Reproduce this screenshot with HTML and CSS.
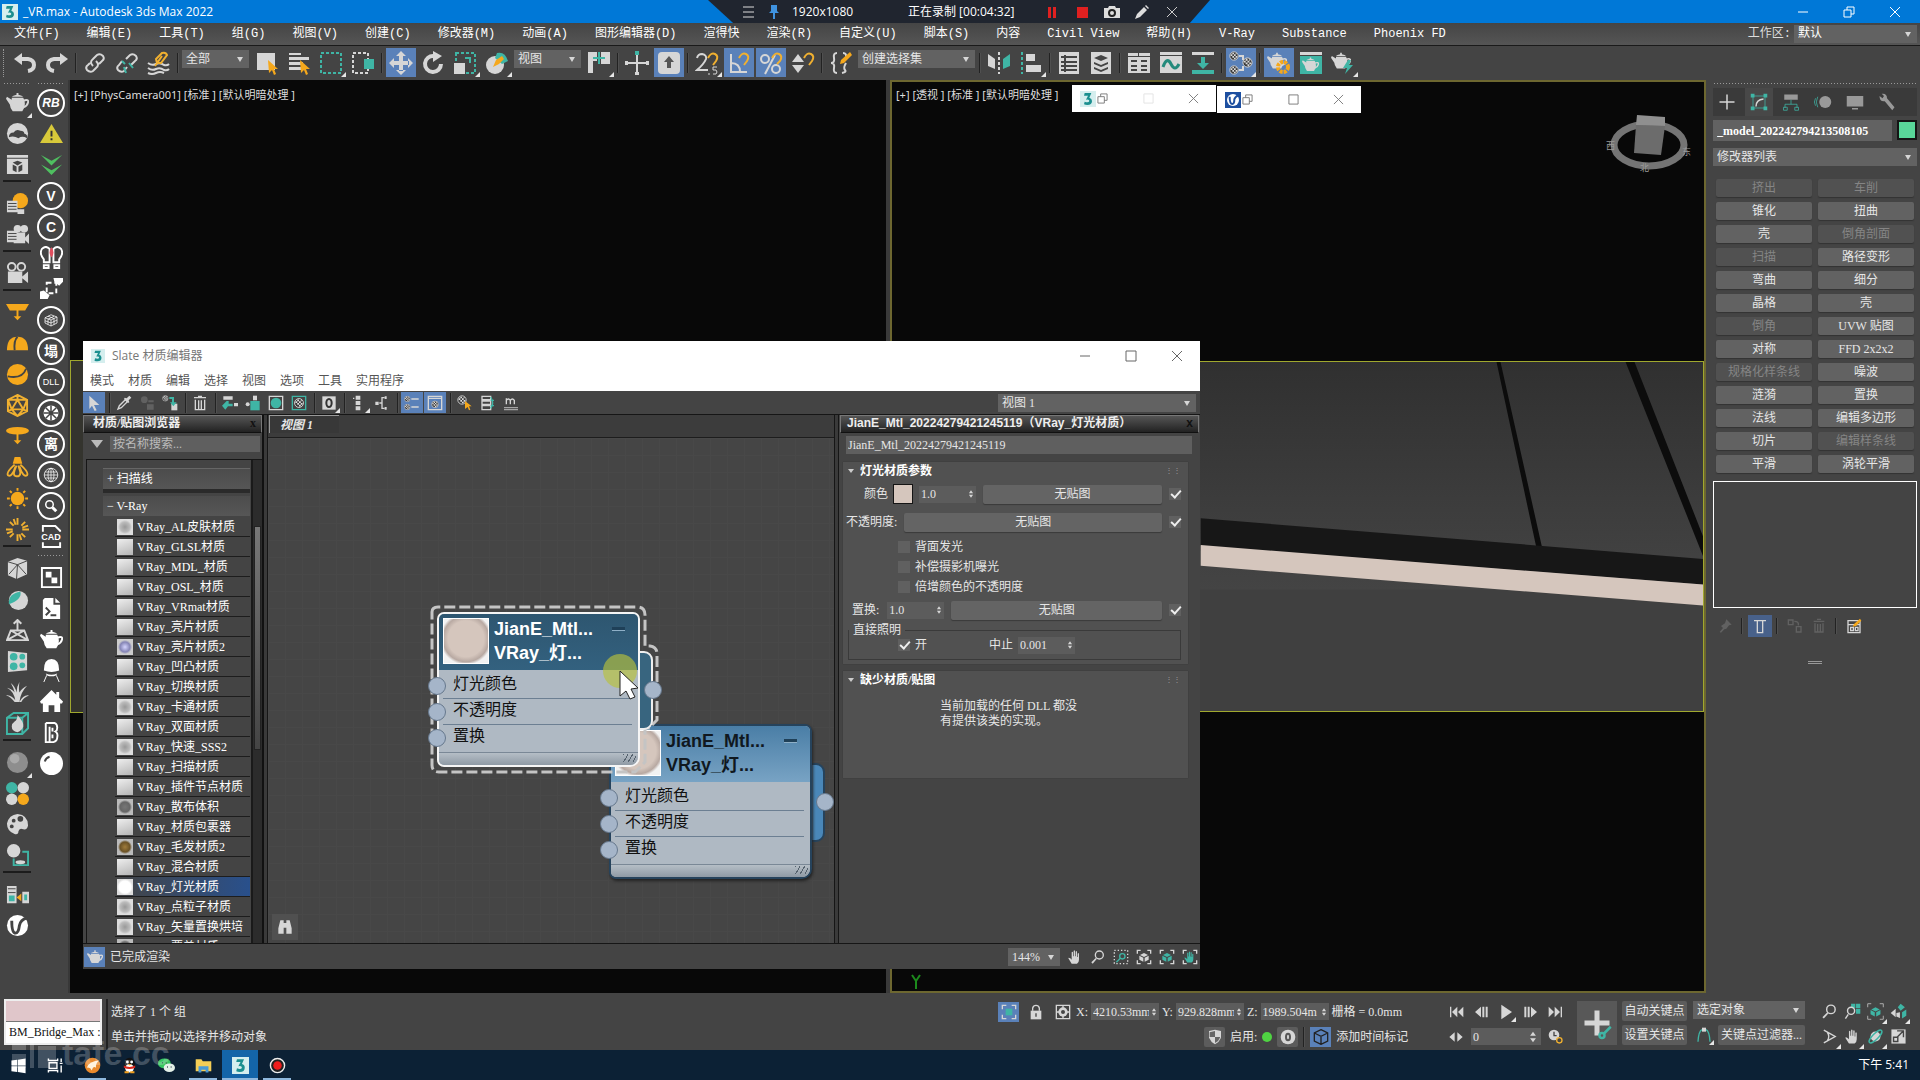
FILE: index.html
```html
<!DOCTYPE html>
<html lang="zh-CN">
<head>
    <meta charset="UTF-8">
    <meta name="viewport" content="width=device-width, initial-scale=1.0">
    <title>_VR.max - Autodesk 3ds Max 2022</title>
    <link rel="stylesheet" href="styles.css">
</head>
<body>
    <!-- Shared icons -->
    <svg class="sprite" aria-hidden="true">
        <symbol id="teapot" viewBox="0 0 24 24"><path d="M6 7h12q4 7-1 14H7Q4 17 4 14L0 8l1-2 5 3zM11 2h2v2q4 1 5 2H6q1-1 5-2z"/><path d="M18 10q6-2 5 2-1 4-5 5" fill="none" stroke="currentColor" stroke-width="2"/></symbol>
        <symbol id="mag" viewBox="0 0 24 24"><circle cx="14" cy="9" r="6" fill="none" stroke="currentColor" stroke-width="2"/><path d="M9 13l1 2-6 7-2-2z"/></symbol>
        <symbol id="hand" viewBox="0 0 24 24"><path d="M7 22l-5-8q0-2 3 0l2 2V5q1-2 2 0v6h1V3q1-2 2 0v8h1V4q1-2 2 0v8h1V7q1-2 2 0v9q0 4-3 6z"/></symbol>
        <symbol id="max" viewBox="0 0 24 24"><rect width="24" height="24" fill="#d5eeee"/><path d="M7 3h10l-3 7q4 1 4 5 0 6-7 6-3 0-5-1l1-4q6 2 7-1 0-3-5-2l3-6H6z" fill="#1b8f8f"/></symbol>
        <symbol id="cube" viewBox="0 0 24 24"><path d="M12 6l6 3-6 3-6-3zM5 10l6 3v6l-6-3zM19 10l-6 3v6l6-3z"/></symbol>
        <symbol id="checks" viewBox="0 0 12 12"><circle cx="6" cy="6" r="5" fill="#3a3a3a" stroke="#ddd"/><path d="M4 2h2v2H4zM8 2h1v2H8zM2 4h2v2H2zM6 4h2v2H6zM4 6h2v2H4zM8 6h2v2H8zM6 8h2v2H6z" fill="#ddd"/></symbol>
        <symbol id="spinarrows" viewBox="0 0 24 24"><path d="M12 3l5 7H7zM12 21l5-7H7z"/></symbol>
    </svg>

    <header class="titlebar">
        <svg class="app-icon"><use href="#max"/></svg>
        <span class="app-title">_VR.max - Autodesk 3ds Max 2022</span>
        <div class="win-buttons">
            <button aria-label="最小化"><svg viewBox="0 0 12 12"><path d="M1 6h10"/></svg></button>
            <button aria-label="还原"><svg viewBox="0 0 12 12"><path d="M1 4h7v7H1zM4 4V1h7v7H8"/></svg></button>
            <button aria-label="关闭"><svg viewBox="0 0 12 12"><path d="M1 1l10 10M11 1L1 11"/></svg></button>
        </div>
        <div class="recorder">
            <svg viewBox="0 0 16 16"><path d="M3 3h11M3 8h11M3 13h11" stroke="#ddd"/></svg>
            <svg viewBox="0 0 16 16"><path d="M5 1h6v6l2 2H3l2-2zM7 9h2v6H7z" fill="#3f93e0"/></svg>
            <span class="rec-size">1920x1080</span>
            <span class="rec-state">正在录制 [00:04:32]</span>
            <svg viewBox="0 0 16 16"><path d="M4 3h3v11H4zM9 3h3v11H9z" fill="#e02020"/></svg>
            <svg viewBox="0 0 16 16"><path d="M3 3h11v11H3z" fill="#e02020"/></svg>
            <svg viewBox="0 0 16 16"><path d="M0 4h4l1-2h6l1 2h4v10H0z" fill="#ddd"/><circle cx="8" cy="9" r="3" fill="none" stroke="#222" stroke-width="2"/></svg>
            <svg viewBox="0 0 16 16"><path d="M1 15l2-5 7-7 3 3-7 7zM11 2l1-1 3 3-1 1z" fill="#ddd"/></svg>
            <svg viewBox="0 0 16 16"><path d="M3 3l10 10M13 3L3 13" stroke="#ccc"/></svg>
        </div>
    </header>

    <nav class="menubar">
        <a href="#">文件(F)</a><a href="#">编辑(E)</a><a href="#">工具(T)</a><a href="#">组(G)</a><a href="#">视图(V)</a><a href="#">创建(C)</a><a href="#">修改器(M)</a><a href="#">动画(A)</a><a href="#">图形编辑器(D)</a><a href="#">渲得快</a><a href="#">渲染(R)</a><a href="#">自定义(U)</a><a href="#">脚本(S)</a><a href="#">内容</a><a href="#">Civil View</a><a href="#">帮助(H)</a><a href="#">V-Ray</a><a href="#">Substance</a><a href="#">Phoenix FD</a>
        <label class="workspace" for="workspace">工作区:</label>
        <span class="drop workspace-drop"><select id="workspace"><option>默认</option></select></span>
    </nav>

    <div class="toolbar">
        <i class="grip"></i>
        <button class="tool" aria-label="撤消"><svg viewBox="0 0 24 24"><path class="line thick" d="M6 8h9q6 1 6 6t-6 6"/><path d="M9 2v12L1 8z"/></svg></button>
        <button class="tool" aria-label="重做"><svg viewBox="0 0 24 24"><path class="line thick" d="M18 8H9q-6 1-6 6t6 6"/><path d="M15 2v12l8-6z"/></svg></button>
        <i class="sep"></i>
        <button class="tool" aria-label="链接"><svg viewBox="0 0 24 24"><path class="line" d="M10 15q-4-4 0-7l4-4q3-2 6 1 2 3-1 5l-3 3M13 10q4 4 0 7l-3 3q-3 2-6-1-2-3 1-5l2-2"/></svg></button>
        <button class="tool" aria-label="取消链接"><svg viewBox="0 0 24 24"><path class="line" d="M11 8l4-4q3-2 6 1 2 3-1 5l-4 4M12 16l-3 4q-3 2-6-1-2-3 1-5l3-4"/><path class="line line-teal" d="M10 13l-3-3M14 12l4 5M9 16l2 6"/></svg></button>
        <button class="tool" aria-label="绑定"><svg viewBox="0 0 24 24"><path class="line" d="M1 12q4 3 8 1t8 1q3 1 5-1M1 17q4 3 8 1t8 1q3 1 5-1M1 22q4 2 8 0t8 0"/><path class="line line-amber" d="M10 12l-1-4 6-6q4-1 5 2l-6 8zM15 5l-7 10"/></svg></button>
        <i class="sep"></i>
        <span class="drop filter-drop"><select aria-label="选择过滤器"><option>全部</option></select></span>
        <button class="tool" aria-label="选择对象"><svg viewBox="0 0 24 24"><path d="M2 2h18v17H2z"/><path class="amber" d="M13 9l10 9h-4l2 5-2 1-2-5-3 3z"/></svg></button>
        <button class="tool" aria-label="按名称选择"><svg viewBox="0 0 24 24"><path d="M2 2h12v2H2zM2 6h20v3H2zM2 11h14v3H2zM2 16h12v3H2z"/><path class="amber" d="M13 9l10 9h-4l2 5-2 1-2-5-3 3z"/></svg></button>
        <button class="tool more" aria-label="矩形选择区域"><svg viewBox="0 0 24 24"><path class="line line-teal" stroke-dasharray="3 2" d="M2 2h20v20H2z"/></svg></button>
        <button class="tool" aria-label="窗口/交叉"><svg viewBox="0 0 24 24"><path class="line" stroke-dasharray="3 2" d="M2 2h15v20H2z"/><path class="teal" d="M13 8h10v10H13z"/></svg></button>
        <i class="sep"></i>
        <button class="tool on" aria-label="移动"><svg viewBox="0 0 24 24"><path d="M12 0l5 5H7zM12 24l5-5H7zM0 12l5-5v10zM24 12l-5-5v10zM10 4h4v6h6v4h-6v6h-4v-6H4v-4h6z"/></svg></button>
        <button class="tool" aria-label="旋转"><svg viewBox="0 0 24 24"><path class="line thick" d="M13 5a8 8 0 1 0 7 8"/><path d="M12 0l9 5-9 6z"/></svg></button>
        <button class="tool more" aria-label="缩放"><svg viewBox="0 0 24 24"><path class="line line-teal" stroke-dasharray="3 2" d="M3 2h19v20H3z"/><path d="M1 12h11v11H1z"/><path class="line line-teal" d="M12 7h5v5"/></svg></button>
        <button class="tool more" aria-label="放置"><svg viewBox="0 0 24 24"><circle cx="10" cy="14" r="9"/><path class="teal" d="M12 2q8-2 11 8l-6 3-7-6z"/><path class="amber" d="M8 16l3-7 6-4 2 3-5 5z"/></svg></button>
        <span class="drop filter-drop"><select aria-label="参考坐标系"><option>视图</option></select></span>
        <button class="tool more" aria-label="使用轴点中心"><svg viewBox="0 0 24 24"><path d="M1 1h9v9H6v12H1zM14 1h9v12h-9z"/><path class="line line-teal" d="M12 1v12M6 7h12"/></svg></button>
        <i class="sep"></i>
        <button class="tool" aria-label="选择并操纵"><svg viewBox="0 0 24 24"><path class="line" d="M12 4v18M2 12h20"/><path class="teal" d="M10 0h4v4h-4z"/><path d="M0 10h3v4H0zM21 10h3v4h-3zM10 21h4v3h-4z"/></svg></button>
        <button class="tool on" aria-label="快捷键覆盖"><svg viewBox="0 0 24 24"><rect x="1" y="1" width="22" height="22" rx="4"/><path d="M12 5l5 6h-3v6h-4v-6H7z" fill="#555"/></svg></button>
        <i class="sep"></i>
        <button class="tool more" aria-label="捕捉"><svg viewBox="0 0 24 24"><path class="line" d="M2 7q1-4 5-4 5 1 4 5-2 5-9 11h11"/><path class="line line-amber" d="M13 7q3-6 7-4t1 7l-3 4"/><path class="line hair" d="M22 16h-4v3q4-1 4 2t-4 2M14 22v2"/></svg></button>
        <button class="tool on" aria-label="角度捕捉"><svg viewBox="0 0 24 24"><path class="line" d="M4 3v18h16M4 12q9 0 9 9"/><path class="line line-amber" d="M12 7q3-6 7-4t1 7l-3 4"/></svg></button>
        <button class="tool on" aria-label="百分比捕捉"><svg viewBox="0 0 24 24"><circle class="line" cx="6" cy="8" r="4"/><circle class="line" cx="17" cy="18" r="4"/><path class="line" d="M16 4L6 23"/><path class="line line-amber" d="M13 7q3-6 7-4t1 7l-3 3"/></svg></button>
        <button class="tool" aria-label="微调器捕捉"><svg viewBox="0 0 24 24"><path d="M7 3l6 8H1zM7 22l6-8H1z"/><path class="line line-amber" d="M13 7q3-6 7-4t1 7l-3 4"/></svg></button>
        <i class="sep"></i>
        <button class="tool" aria-label="编辑命名选择集"><svg viewBox="0 0 24 24"><path class="line" d="M8 2Q4 2 5 7t-3 5q4 0 3 5t3 5M14 2q4 0 3 5M17 12q-3 5-1 7t-3 3"/><path class="amber" d="M11 13l1-4 9-8 2 3-8 8z"/></svg></button>
        <span class="drop set-drop"><select aria-label="命名选择集"><option>创建选择集</option></select></span>
        <i class="sep"></i>
        <button class="tool" aria-label="镜像"><svg viewBox="0 0 24 24"><path d="M1 3l7 5v10l-7-3z"/><path class="teal" d="M23 3l-7 5v10l7-3z"/><path class="line" stroke-dasharray="3 2" d="M12 1v22"/></svg></button>
        <button class="tool more" aria-label="对齐"><svg viewBox="0 0 24 24"><path class="line line-teal" stroke-dasharray="3 2" d="M3 1v22"/><path d="M7 3h9v7H7zM7 14h15v7H7z"/></svg></button>
        <i class="sep"></i>
        <button class="tool" aria-label="场景资源管理器"><svg viewBox="0 0 24 24"><path d="M2 1h20v22H2z"/><path d="M4 6h16M4 11h16M4 15h16M4 19h16M8 4v17" stroke="#444" stroke-width="2"/></svg></button>
        <button class="tool" aria-label="层资源管理器"><svg viewBox="0 0 24 24"><path d="M2 1h20v22H2z"/><path d="M12 4l7 3-7 3-7-3zM5 11l7 3 7-3v2l-7 3-7-3zM5 16l7 3 7-3v2l-7 3-7-3z" fill="#444"/></svg></button>
        <i class="sep"></i>
        <button class="tool" aria-label="功能区"><svg viewBox="0 0 24 24"><path d="M1 2h10v3H1zM12 2h11v3H12zM1 6h22v16H1z"/><path d="M4 10h6M4 15h6M14 10h6M14 15h6M4 19h6M14 19h6" stroke="#444" stroke-width="2"/></svg></button>
        <button class="tool" aria-label="曲线编辑器"><svg viewBox="0 0 24 24"><path d="M1 1h22v3H1zM1 5h22v17H1z"/><path d="M4 16q4-11 8-3t8 0" fill="none" stroke="#248a7c" stroke-width="3"/></svg></button>
        <button class="tool" aria-label="图解视图"><svg viewBox="0 0 24 24"><path d="M1 1h22v3H1z"/><path class="teal" d="M10 6h4v6h4l-6 6-6-6h4zM1 19h22v4H1z"/></svg></button>
        <i class="sep"></i>
        <button class="tool on more" aria-label="材质编辑器"><svg viewBox="0 0 24 24"><use href="#checks" x="0" y="0" width="10" height="10"/><use href="#checks" x="0" y="14" width="10" height="10"/><use href="#checks" x="13" y="6" width="11" height="11"/><path class="line" d="M10 5h4v4M10 19h4v-4"/></svg></button>
        <i class="sep"></i>
        <button class="tool on" aria-label="渲染设置"><svg viewBox="0 0 24 24"><use href="#teapot" width="20" height="20"/><circle cx="16" cy="16" r="5" fill="none" stroke="#f5a81c" stroke-width="4" stroke-dasharray="3 1"/></svg></button>
        <button class="tool" aria-label="渲染帧窗口"><svg viewBox="0 0 24 24"><path d="M1 1h22v3H1z"/><path class="teal" d="M1 5h22v18H1z"/><use href="#teapot" x="3" y="5" width="17" height="17"/></svg></button>
        <button class="tool more" aria-label="渲染"><svg viewBox="0 0 24 24"><use href="#teapot" width="20" height="20"/><path class="teal" d="M17 9l-5 8h4l-2 6 8-9h-4l2-5z"/></svg></button>
    </div>

    <main class="workspace-area">
        <div class="side">
            <div class="side-col">
                <i class="dots"></i>
                <button class="more" aria-label="渲染"><svg viewBox="0 0 24 24"><use href="#teapot" width="24" height="24"/></svg></button>
                <button aria-label="云渲染"><svg viewBox="0 0 24 24"><circle cx="12" cy="12" r="11"/><path d="M3 16q0-5 5-5 2-4 7-2 4 0 4 3 4 1 3 5-5-3-9 0-5-3-10-1z" fill="#444"/></svg></button>
                <button aria-label="渲染窗口"><svg viewBox="0 0 24 24"><path d="M1 2h22v3H1zM1 6h22v16H1z"/><path d="M12 8l5 2-5 3-5-3zM7 12l4 2v6l-4-2zM17 12l-4 2v6l4-2z" fill="#444"/></svg></button>
                <i class="rule"></i>
                <button aria-label="灯光列表"><svg viewBox="0 0 24 24"><circle class="amber" cx="15" cy="9" r="8"/><path d="M12 18h7v5h-7zM1 9h11v12H1z"/><path d="M2 12h9M2 15h9M2 18h9" stroke="#444"/></svg></button>
                <button aria-label="摄影机列表"><svg viewBox="0 0 24 24"><circle cx="12" cy="6" r="4"/><circle cx="19" cy="6" r="4"/><path d="M8 10h12v11H8zM20 15l4-4v11l-4-4zM1 8h11v12H1z"/><path d="M2 11h9M2 14h9M2 17h9" stroke="#444"/></svg></button>
                <i class="rule"></i>
                <button aria-label="物理摄影机"><svg viewBox="0 0 24 24"><circle class="line" cx="6" cy="5" r="4"/><circle class="line" cx="16" cy="5" r="4"/><path d="M2 10h15v12H2zM17 15l6-5v12l-6-5z"/></svg></button>
                <i class="rule"></i>
                <button aria-label="平面灯"><svg class="amber" viewBox="0 0 24 24"><path d="M0 3h24l-4 7H4zM11 9h2v7h3l-4 4-4-4h3z"/></svg></button>
                <button aria-label="穹顶灯"><svg class="amber" viewBox="0 0 24 24"><path d="M1 19Q1 5 12 5t11 14z"/><path d="M12 5Q8 9 9 19" fill="none" stroke="#444" stroke-width="2"/></svg></button>
                <button aria-label="球形灯"><svg class="amber" viewBox="0 0 24 24"><circle cx="12" cy="12" r="11"/><path d="M2 14q15 3 19-8" fill="none" stroke="#444" stroke-width="2"/></svg></button>
                <button aria-label="网格灯"><svg viewBox="0 0 24 24"><path class="line line-amber" d="M12 1l10 5v12l-10 5-10-5V6zM12 6l6 10H6zM12 1v5M2 6l10 0 10 0M2 18l4-2M22 18l-4-2M2 6l4 10M22 6l-4 10M6 16l6 7 6-7"/></svg></button>
                <button aria-label="圆盘灯"><svg class="amber" viewBox="0 0 24 24"><ellipse cx="12" cy="6" rx="12" ry="4"/><path d="M11 9h2v7h3l-4 4-4-4h3z"/></svg></button>
                <button aria-label="IES灯"><svg viewBox="0 0 24 24"><path class="amber" d="M9 1h6l2 7H7z"/><path class="line line-amber" d="M9 9q-9 8-7 11 4 3 8-9M15 9q9 8 7 11-4 3-8-9M11 10q-5 10-1 11 5 1 5-4l-2-7"/></svg></button>
                <button aria-label="太阳"><svg class="amber" viewBox="0 0 24 24"><circle cx="12" cy="12" r="7"/><path d="M12 1v3M12 20v3M1 12h3M20 12h3M4 4l2 2M18 18l2 2M20 4l-2 2M4 20l2-2" stroke="#f5a81c" stroke-width="2"/></svg></button>
                <button aria-label="环境灯"><svg viewBox="0 0 24 24"><path class="line line-amber" d="M12 0v7M12 17v7M0 12h7M17 12h7M4 4l4 4M16 16l4 4M20 4l-4 4M8 16l-4 4M8 1l2 6M14 17l2 6M1 16l6-2M17 10l6-2"/></svg></button>
                <i class="rule"></i>
                <button aria-label="代理"><svg viewBox="0 0 24 24"><path d="M2 5l10-4 10 3v14l-11 5-9-4z"/><path d="M2 5l10 3 10-4M12 8l-1 15M12 8L3 18M12 8l9 10" fill="none" stroke="#444"/></svg></button>
                <button aria-label="毛发"><svg viewBox="0 0 24 24"><circle cx="13" cy="13" r="10"/><path class="teal" d="M3 17Q2 6 15 4q2 8-12 13z"/></svg></button>
                <button aria-label="平面"><svg viewBox="0 0 24 24"><path class="line" d="M5 12h14l4 10H1zM5 12l18 10M19 12L1 22M12 13V1M8 5l4-4 4 4"/></svg></button>
                <button aria-label="置换"><svg viewBox="0 0 24 24"><path d="M2 1l20 2v18L2 23z"/><circle class="teal" cx="8" cy="7" r="4"/><circle class="teal" cx="17" cy="7" r="3"/><circle class="teal" cx="8" cy="17" r="4"/><circle class="teal" cx="17" cy="16" r="3"/></svg></button>
                <button aria-label="草"><svg viewBox="0 0 24 24"><path d="M10 22Q9 11 1 7q5 1 8 5Q8 7 5 2q5 4 6 10 0-6 3-11-1 7 0 11 3-5 8-7-7 7-8 17zM9 22Q5 16 0 15q6-1 11 7zM14 22q4-8 10-7-6 2-8 7z"/></svg></button>
                <button aria-label="火焰"><svg viewBox="0 0 24 24"><path class="line line-teal" d="M1 6l7-5h15v16l-6 6H1zM1 6h16v17M17 6l6-5"/><path d="M12 3q7 8 6 12t-6 6q-6-1-6-6 0-3 3-5 3-2 3-7z"/></svg></button>
                <i class="rule"></i>
                <button class="more" aria-label="材质球"><svg viewBox="0 0 24 24"><circle cx="12" cy="12" r="11" fill="#8e8e8e"/><circle cx="9" cy="8" r="5" fill="#aaa"/></svg></button>
                <button aria-label="材质库"><svg viewBox="0 0 24 24"><circle class="teal" cx="6" cy="6" r="6"/><circle cx="18" cy="6" r="6"/><circle cx="6" cy="18" r="6"/><circle class="amber" cx="18" cy="18" r="6"/></svg></button>
                <button aria-label="调色板"><svg viewBox="0 0 24 24"><path d="M12 1q11 1 11 12-1 5-5 4-4-2-5 2 0 4-4 3Q1 19 1 11 3 2 12 1z"/><g fill="#444"><circle cx="8" cy="8" r="2"/><circle cx="15" cy="6" r="3"/><circle cx="6" cy="14" r="2"/></g></svg></button>
                <button aria-label="烘焙"><svg viewBox="0 0 24 24"><circle cx="8" cy="7" r="7"/><path class="line line-teal" d="M17 8h6v14H8v-7"/><ellipse cx="15" cy="19" rx="5" ry="2"/></svg></button>
                <i class="rule"></i>
                <button aria-label="帧缓冲"><svg viewBox="0 0 24 24"><path d="M1 3h10v18H1zM17 9h7v12h-7z"/><path class="teal" d="M3 13h6v6H3zM19 12h3v6h-3z"/><path class="amber" d="M11 15l5-4v8z"/><path d="M2 6h8M2 10h8" stroke="#444"/></svg></button>
                <button aria-label="V-Ray"><svg class="white" viewBox="0 0 24 24"><circle cx="12" cy="12" r="11"/><path d="M6 7q0 13 4 13 3 0 4-8 1-6 8-8" fill="none" stroke="#444" stroke-width="3"/></svg></button>
            </div>
            <div class="side-col white">
                <i class="dots"></i>
                <button class="ring rb">RB</button>
                <button aria-label="警告"><svg viewBox="0 0 24 24"><path d="M12 2l12 20H0z" fill="#d8c93a"/><path d="M11 9h2v6h-2zM11 17h2v2h-2z" fill="#333"/></svg></button>
                <button aria-label="向下"><svg viewBox="0 0 24 24"><path d="M1 2l11 6 11-6-11 11zM1 12l11 6 11-6-11 11z" fill="#4fbf60"/></svg></button>
                <button class="ring">V</button>
                <button class="ring">C</button>
                <button aria-label="灯泡"><svg viewBox="0 0 24 24"><path class="line" d="M4 17v-3Q-1 8 2 3q4-4 8 0v14zM20 17v-3q5-6 2-11-4-4-8 0v14zM4 20h5v3H4zM15 20h5v3h-5z"/><path d="M12 1q4 6 0 11-4-5 0-11z" fill="#e05060"/></svg></button>
                <button aria-label="区域"><svg viewBox="0 0 24 24"><path class="line" stroke-dasharray="5 3" d="M7 6h10v11H7z"/><path d="M14 1h10v4l-4 4-5-4zM0 15l4-1 6 5-2 4H0z"/></svg></button>
                <button class="ring" aria-label="代理"><svg viewBox="0 0 24 24"><path class="line hair" d="M4 9l8-4 8 3v8l-8 4-8-4zM4 9l8 3 8-4M12 12v8M8 7l8 3v8M16 7l-8 4v7M4 13l8 3 8-4"/></svg></button>
                <button class="ring">塌</button>
                <button class="ring dll">DLL</button>
                <button class="ring" aria-label="轮"><svg viewBox="0 0 24 24"><circle cx="12" cy="12" r="10"/><path d="M12 2v20M2 12h20M5 5l14 14M19 5L5 19" stroke="#444" stroke-width="2"/></svg></button>
                <button class="ring">离</button>
                <button class="ring" aria-label="球"><svg viewBox="0 0 24 24"><circle class="line hair" cx="12" cy="12" r="9"/><ellipse class="line hair" cx="12" cy="12" rx="4" ry="9"/><path class="line hair" d="M3 12h18M4 8h16M4 16h16M12 3v18"/></svg></button>
                <button class="ring" aria-label="搜索"><svg viewBox="0 0 24 24"><circle class="line" cx="10" cy="10" r="5"/><path class="line thick" d="M14 14l5 5"/></svg></button>
                <button class="cad"><svg viewBox="0 0 24 24"><path class="line" d="M3 7V1h13l5 5v1M3 18v5h18v-5"/></svg><span>CAD</span></button>
                <i class="dots"></i>
                <button aria-label="棋盘"><svg viewBox="0 0 24 24"><path class="line" d="M2 2h20v20H2z"/><path d="M6 6h6v6H6zM12 12h6v6h-6z"/></svg></button>
                <button aria-label="脚本"><svg viewBox="0 0 24 24"><path d="M5 1h9v7h7v15H3V3zM16 1l5 5h-5z"/><path d="M6 11l4 4-4 4M11 19h6" fill="none" stroke="#444" stroke-width="2"/></svg></button>
                <button aria-label="茶壶"><svg viewBox="0 0 24 24"><use href="#teapot" width="24" height="24"/></svg></button>
                <button aria-label="椅子"><svg viewBox="0 0 24 24"><path d="M4 12Q4 0 12 0t8 12q-8 3-16 0zM6 15q6 3 12 0-1 3-6 3t-6-3z"/><path class="line hair" d="M7 17L4 24M17 17l3 7"/></svg></button>
                <button aria-label="房子"><svg viewBox="0 0 24 24"><path d="M12 0l5 5V2h3v6l4 4-1 2h-2v9h-6v-7H9v7H3v-9H1l-1-2z"/></svg></button>
                <button aria-label="模型"><svg viewBox="0 0 24 24"><path class="line" d="M6 2h9q3 1 3 5 0 3-2 4 3 2 2 6 0 4-4 5h-4V6M6 2v20h3M13 7v4M13 14v4"/></svg></button>
                <button aria-label="球"><svg viewBox="0 0 24 24"><circle cx="12" cy="12" r="12"/><path d="M5 10q1-4 5-5" fill="none" stroke="#444" stroke-width="2"/></svg></button>
            </div>
        </div>

        <div class="viewports">
            <section class="viewport">
                <p class="vp-label">[+] [PhysCamera001] [标准 ] [默认明暗处理 ]</p>
                <div class="frame"></div>
                <svg class="axis" viewBox="0 0 12 20"><path d="M2 4l4 6v8M10 4l-4 6"/></svg>
            </section>
            <section class="viewport active">
                <p class="vp-label">[+] [透视 ] [标准 ] [默认明暗处理 ]</p>
                <svg class="viewcube" viewBox="0 0 90 64">
                    <ellipse cx="45" cy="36" rx="35" ry="21" fill="none" stroke="#747474" stroke-width="7"/>
                    <path d="M33 6l28 2v9l-29-1z" fill="#8f8f8f"/><path d="M32 16l29 1-4 29-27-2z" fill="#6c6c6c"/>
                    <text x="2" y="40">西</text><text x="36" y="62">北</text><text x="78" y="46">东</text>
                </svg>
                <div class="frame">
                    <svg viewBox="0 0 816 353" preserveAspectRatio="none">
                        <defs><linearGradient id="floor" x2="0" y2="1"><stop offset="0" stop-color="#303030"/><stop offset="1" stop-color="#444"/></linearGradient></defs>
                        <rect width="816" height="353" fill="#404040"/>
                        <path d="M0 0h816v230H0z" fill="url(#floor)"/>
                        <path d="M608 0h4l42 188-6-1zM738 0h9l69 176v20z" fill="#0c0c0c"/>
                        <path d="M310 158l506 41v26L310 186z" fill="#171717"/>
                        <path d="M310 185l506 40v21L310 206z" fill="#d5c6bd"/>
                    </svg>
                </div>
            </section>
        </div>

        <aside class="command">
            <i class="dots"></i>
            <div class="tabs">
                <button aria-label="创建"><svg viewBox="0 0 24 24"><path class="line" d="M12 2v20M2 12h20"/></svg></button>
                <button class="on" aria-label="修改"><svg viewBox="0 0 24 24"><path class="line line-teal hair" d="M4 4h16v16H4z"/><path class="teal" d="M1 1h5v5H1zM18 1h5v5h-5zM1 18h5v5H1zM18 18h5v5h-5z"/><path class="line" d="M8 18q0-9 10-10"/></svg></button>
                <button aria-label="层次"><svg viewBox="0 0 24 24"><path d="M3 2h18v7H3z"/><path class="line line-teal hair" d="M12 9v6M4 20v-5h16v5M2 19h5v4H2zM17 19h5v4h-5z"/></svg></button>
                <button aria-label="运动"><svg viewBox="0 0 24 24"><circle cx="15" cy="12" r="8"/><path class="line line-teal hair" d="M5 5q-4 7 0 14M2 7q-3 5 0 10"/></svg></button>
                <button aria-label="显示"><svg viewBox="0 0 24 24"><path d="M1 4h22v14H1zM8 20h8v2H8z"/></svg></button>
                <button aria-label="实用程序"><svg viewBox="0 0 24 24"><path d="M2 4l4 3 2-3-3-3q7-1 7 6l10 12-3 4L9 11Q2 12 2 4z"/></svg></button>
            </div>
            <div class="name-row">
                <input class="obj-name" type="text" aria-label="对象名称" value="_model_202242794213508105">
                <button class="swatch green" aria-label="颜色"></button>
            </div>
            <span class="drop mod-drop"><select aria-label="修改器列表"><option>修改器列表</option></select></span>
            <div class="mods">
                <button disabled>挤出</button><button disabled>车削</button>
                <button>锥化</button><button>扭曲</button>
                <button>壳</button><button disabled>倒角剖面</button>
                <button disabled>扫描</button><button>路径变形</button>
                <button>弯曲</button><button>细分</button>
                <button>晶格</button><button>壳</button>
                <button disabled>倒角</button><button>UVW 贴图</button>
                <button>对称</button><button>FFD 2x2x2</button>
                <button disabled>规格化样条线</button><button>噪波</button>
                <button>涟漪</button><button>置换</button>
                <button>法线</button><button>编辑多边形</button>
                <button>切片</button><button disabled>编辑样条线</button>
                <button>平滑</button><button>涡轮平滑</button>
            </div>
            <div class="stack"></div>
            <div class="stack-tools">
                <button disabled aria-label="锁定堆栈"><svg viewBox="0 0 24 24"><path d="M14 2l8 8-4 1-4 5-3 1-5 5-2-1 5-6-3-3 6-4z"/></svg></button>
                <i class="sep"></i>
                <button class="on" aria-label="显示最终结果"><svg viewBox="0 0 24 24"><path class="line" d="M3 4h18M8 4v18h8V4"/></svg></button>
                <i class="sep"></i>
                <button disabled aria-label="使唯一"><svg viewBox="0 0 24 24"><path class="line" d="M2 3h7v7H2zM14 13h7v8h-7zM11 5q7 0 6 6"/></svg></button>
                <button disabled aria-label="移除"><svg viewBox="0 0 24 24"><path class="line" d="M4 5h16M9 2h6M6 8v13h12V8M10 9v11M14 9v11"/></svg></button>
                <i class="sep"></i>
                <button aria-label="配置修改器集"><svg viewBox="0 0 24 24"><path class="line" d="M3 4h18v18H3zM3 10h18M7 14h4v5H7zM14 14h4v5h-4z"/><path class="amber" d="M10 13l2-4 9-8 2 3-8 8z"/></svg></button>
            </div>
            <i class="panel-grip"></i>
        </aside>
    </main>

    <footer class="status">
        <div class="listener"><div class="pink"></div><input type="text" aria-label="MAXScript" value="BM_Bridge_Max :"></div>
        <div class="prompt"><p>选择了 1 个 组</p><p>单击并拖动以选择并移动对象</p></div>
        <div class="coords">
            <div class="status-row">
                <button class="mini on" aria-label="孤立"><svg viewBox="0 0 24 24"><path class="line" d="M2 8V2h6M16 2h6v6M22 16v6h-6M8 22H2v-6"/><path class="teal" d="M7 7h10v10H7z"/></svg></button>
                <button class="mini" aria-label="锁定"><svg viewBox="0 0 24 24"><path d="M4 10h16v13H4z"/><path class="line" d="M7 10V6q1-4 5-4t5 4v4"/><path d="M11 14h2v5h-2z" fill="#444"/></svg></button>
                <button class="mini" aria-label="绝对模式"><svg viewBox="0 0 24 24"><path class="line" d="M2 2h20v20H2zM12 2v20M2 12h20"/><circle cx="12" cy="12" r="7"/><circle cx="12" cy="12" r="3" fill="#444"/></svg></button>
                <label for="cx">X:</label><span class="spin"><input id="cx" type="text" value="4210.53mm"><svg><use href="#spinarrows"/></svg></span>
                <label for="cy">Y:</label><span class="spin"><input id="cy" type="text" value="929.828mm"><svg><use href="#spinarrows"/></svg></span>
                <label for="cz">Z:</label><span class="spin"><input id="cz" type="text" value="1989.504m"><svg><use href="#spinarrows"/></svg></span>
                <span class="grid-size">栅格 = 0.0mm</span>
            </div>
            <div class="status-row second">
                <button class="mini flat" aria-label="安全"><svg viewBox="0 0 24 24"><path d="M3 3l9-2 9 2v10q-3 7-9 10-6-3-9-10z"/><path d="M12 3v9H4V5zM12 12h8q-2 6-8 9z" fill="#666"/></svg></button>
                <span>启用:</span><i class="led"></i>
                <button class="mini flat" aria-label="0"><svg viewBox="0 0 24 24"><circle cx="12" cy="12" r="11"/><ellipse cx="12" cy="12" rx="3" ry="5" fill="none" stroke="#555" stroke-width="3"/></svg></button>
                <i class="sep"></i>
                <button class="mini on" aria-label="标记"><svg viewBox="0 0 24 24"><path d="M12 1l10 5v12l-10 5-10-5V6zM2 6l10 5 10-5M12 11v12" fill="none" stroke="#222" stroke-width="2"/></svg></button>
                <span class="time-tag">添加时间标记</span>
            </div>
        </div>
        <div class="playback">
            <div class="play-row">
                <button aria-label="转至开头"><svg viewBox="0 0 24 24"><path d="M3 4h2v16H3zM14 4v16l-8-8zM23 4v16l-8-8z"/></svg></button>
                <button aria-label="上一帧"><svg viewBox="0 0 24 24"><path d="M12 4v16l-9-8zM14 4h3v16h-3zM19 4h3v16h-3z"/></svg></button>
                <button class="more" aria-label="播放"><svg viewBox="0 0 24 24"><path d="M5 1l16 11L5 23z"/></svg></button>
                <button aria-label="下一帧"><svg viewBox="0 0 24 24"><path d="M2 4h3v16H2zM7 4h3v16H7zM12 4l9 8-9 8z"/></svg></button>
                <button aria-label="转至结尾"><svg viewBox="0 0 24 24"><path d="M1 4l8 8-8 8zM10 4l8 8-8 8zM19 4h2v16h-2z"/></svg></button>
            </div>
            <div class="play-row">
                <button aria-label="关键点模式"><svg viewBox="0 0 24 24"><path d="M10 5v14l-8-7zM14 5l8 7-8 7z"/></svg></button>
                <span class="spin frame-no"><input type="text" aria-label="当前帧" value="0"><svg><use href="#spinarrows"/></svg></span>
                <button aria-label="时间配置"><svg viewBox="0 0 24 24"><circle cx="9" cy="9" r="8"/><path d="M9 4v6h4" fill="none" stroke="#444" stroke-width="2"/><circle class="line line-amber" cx="17" cy="17" r="4"/></svg></button>
            </div>
        </div>
        <button class="setkey" aria-label="设置关键点"><svg viewBox="0 0 24 24"><path d="M10 2h4v8h8v4h-8v8h-4v-8H2v-4h8z"/><path class="line line-teal" d="M23 15l-6 6"/><circle class="line line-teal" cx="16" cy="22" r="2"/></svg></button>
        <div class="keys">
            <button class="flat">自动关键点</button>
            <span class="drop key-drop"><select aria-label="选定对象"><option>选定对象</option></select></span>
            <button class="flat">设置关键点</button>
            <div class="key-filter">
                <button class="mini more" aria-label="切线"><svg viewBox="0 0 24 24"><path class="line line-teal" d="M3 22Q4 6 9 4M15 4q5 2 6 18"/><path d="M9 1h6v6H9z"/></svg></button>
                <button class="flat">关键点过滤器...</button>
            </div>
        </div>
        <div class="nav">
            <button aria-label="缩放"><svg><use href="#mag"/></svg></button>
            <button aria-label="缩放所有"><svg viewBox="0 0 24 24"><path class="teal" d="M10 1h6v6h-6zM17 1h6v6h-6zM17 8h6v7h-6z"/><circle class="line" cx="10" cy="11" r="5"/><path class="line" d="M6 16l-4 6"/></svg></button>
            <button class="more" aria-label="最大化显示"><svg viewBox="0 0 24 24"><path class="line hair" d="M1 6V1h5M18 1h5v5M23 18v5h-5M6 23H1v-5"/><use class="teal" href="#cube" width="24" height="24"/></svg></button>
            <button class="more" aria-label="所有视图最大化"><svg viewBox="0 0 24 24"><path class="teal" d="M15 1l6 5-6 5-4-5zM17 13l6-4v9l-6 4z"/><path d="M1 14l7-6v12zM9 14l5-1v8l-5-2z"/></svg></button>
            <button class="more" aria-label="视野"><svg viewBox="0 0 24 24"><path class="line" d="M4 3l16 9L4 21M9 6q4 6 0 12"/></svg></button>
            <button class="more" aria-label="平移"><svg><use href="#hand"/></svg></button>
            <button class="more" aria-label="环绕"><svg viewBox="0 0 24 24"><circle cx="12" cy="12" r="7"/><ellipse class="line line-teal" cx="12" cy="12" rx="12" ry="4" transform="rotate(-45 12 12)"/></svg></button>
            <button aria-label="最大化视口"><svg viewBox="0 0 24 24"><path d="M2 2h20v20H2z"/><path d="M10 4h9v9M18 5l-8 8M5 13h6v6H5z" fill="none" stroke="#444" stroke-width="2"/></svg></button>
        </div>
    </footer>

    <footer class="taskbar">
        <button aria-label="开始"><svg viewBox="0 0 24 24"><path d="M2 5l8-1v8H2zM11 4l11-2v10H11zM2 13h8v8l-8-1zM11 13h11v10l-11-2z" fill="#fff"/></svg></button>
        <button aria-label="任务视图"><svg viewBox="0 0 24 24"><path d="M2 2v3h13V2M3 8h11v8H3zM2 22v-3h13v3M20 2v5M20 12v10M18 9h4" fill="none" stroke="#fff" stroke-width="2"/></svg></button>
        <button class="open" aria-label="浏览器"><svg viewBox="0 0 24 24"><circle cx="12" cy="12" r="11" fill="#e98a2d"/><path d="M4 15q3-9 17-10-5 5-4 10-4-3-6 4-2-5-7-4z" fill="#fff3dc"/></svg></button>
        <button aria-label="QQ"><svg viewBox="0 0 24 24"><ellipse cx="12" cy="11" rx="8" ry="10" fill="#111"/><ellipse cx="12" cy="16" rx="6" ry="6" fill="#fff"/><path d="M4 12q8 4 16 0v3q-8 4-16 0z" fill="#d9281e"/><circle cx="9" cy="7" r="2" fill="#fff"/><circle cx="15" cy="7" r="2" fill="#fff"/><path d="M5 20h6v3H5zM13 20h6v3h-6zM9 10h6l-3 2z" fill="#f2a01e"/></svg></button>
        <button aria-label="微信"><svg viewBox="0 0 24 24"><ellipse cx="9" cy="9" rx="9" ry="7" fill="#35c55f"/><ellipse cx="16" cy="15" rx="8" ry="6" fill="#e4f0e8"/><path d="M6 7h1v2H6zM11 7h1v2h-1zM13 13h1v2h-1zM18 13h1v2h-1z" fill="#123"/></svg></button>
        <button class="open" aria-label="文件夹"><svg viewBox="0 0 24 24"><path d="M1 3h8l2 3h12v14H1z" fill="#f5ce56"/><path d="M5 22v-9h14v9h-4v-4H9v4z" fill="#4a9ad6"/></svg></button>
        <button class="open current" aria-label="3ds Max"><svg><use href="#max"/></svg></button>
        <button class="open" aria-label="录制"><svg viewBox="0 0 24 24"><circle cx="12" cy="12" r="10" fill="#222" stroke="#eee" stroke-width="2"/><circle cx="12" cy="12" r="6" fill="#ee1c1c"/></svg></button>
        <time>下午 5:41</time>
    </footer>

    <!-- Small floating windows -->
    <div class="floater first"><svg><use href="#max"/></svg><svg class="glyph" viewBox="0 0 12 12"><path d="M1 4h7v7H1zM4 4V1h7v7H8"/></svg><svg class="glyph faint" viewBox="0 0 12 12"><path d="M1 1h10v10H1z"/></svg><svg class="glyph" viewBox="0 0 12 12"><path d="M1 1l10 10M11 1L1 11"/></svg></div>
    <div class="floater second-win"><svg viewBox="0 0 24 24"><path d="M0 0h24v24H0z" fill="#1d4fa0"/><circle cx="12" cy="12" r="9" fill="#fff"/><path d="M7 7q0 11 4 11 3 0 3-7 1-4 6-6" fill="none" stroke="#1d4fa0" stroke-width="3"/></svg><svg class="glyph" viewBox="0 0 12 12"><path d="M1 4h7v7H1zM4 4V1h7v7H8"/></svg><svg class="glyph" viewBox="0 0 12 12"><path d="M1 1h10v10H1z"/></svg><svg class="glyph" viewBox="0 0 12 12"><path d="M1 1l10 10M11 1L1 11"/></svg></div>

    <!-- Slate material editor -->
    <div class="slate">
        <div class="slate-title">
            <svg class="slate-icon"><use href="#max"/></svg><span>Slate 材质编辑器</span>
            <div class="slate-buttons">
                <button aria-label="最小化"><svg viewBox="0 0 12 12"><path d="M1 6h10"/></svg></button>
                <button aria-label="最大化"><svg viewBox="0 0 12 12"><path d="M1 1h10v10H1z"/></svg></button>
                <button aria-label="关闭"><svg viewBox="0 0 12 12"><path d="M1 1l10 10M11 1L1 11"/></svg></button>
            </div>
        </div>
        <nav class="slate-menu"><a href="#">模式</a><a href="#">材质</a><a href="#">编辑</a><a href="#">选择</a><a href="#">视图</a><a href="#">选项</a><a href="#">工具</a><a href="#">实用程序</a></nav>
        <div class="slate-tools">
            <button class="on" aria-label="选择"><svg viewBox="0 0 24 24"><path d="M5 1l15 14h-8l4 8-3 1-4-8-4 5z"/></svg></button>
            <i class="sep"></i>
            <button aria-label="拾取"><svg viewBox="0 0 24 24"><path class="line" d="M3 21l2-5 9-9 3 3-9 9z"/><path d="M13 4l3 1 4-4 3 3-4 4 1 3-2 1-6-6z"/></svg></button>
            <button disabled aria-label="放入"><svg viewBox="0 0 24 24"><circle cx="8" cy="7" r="5"/><path d="M12 14h10v8H12zM14 8h8v3h-8z"/></svg></button>
            <button aria-label="指定"><svg viewBox="0 0 24 24"><use href="#checks" width="10" height="10"/><path d="M14 13h9v10h-9z"/><path class="teal" d="M11 3h7v8h4l-5 6-5-6h3V6h-4z"/></svg></button>
            <i class="sep"></i>
            <button aria-label="删除"><svg viewBox="0 0 24 24"><path class="line" d="M3 4h18M9 2h6M5 7v15h14V7M10 8v13M14 8v13"/></svg></button>
            <i class="sep"></i>
            <button aria-label="移动子对象"><svg viewBox="0 0 24 24"><path d="M2 2h14v5H2zM18 12h6v5h-6z"/><path class="teal" d="M7 9h3v4h6v4H9l-4 5-5-6z"/></svg></button>
            <button aria-label="隐藏"><svg viewBox="0 0 24 24"><path class="teal" d="M8 9h14v14H8z"/><path d="M12 1h6v7h-6z"/><circle cx="4" cy="14" r="3"/></svg></button>
            <button aria-label="显示贴图"><svg viewBox="0 0 24 24"><path class="line" d="M2 2h20v20H2z"/><circle class="teal" cx="12" cy="12" r="8"/></svg></button>
            <button aria-label="背景"><svg viewBox="0 0 24 24"><path class="line line-teal" d="M2 2h20v20H2z"/><use href="#checks" x="4" y="4" width="16" height="16"/></svg></button>
            <i class="sep"></i>
            <button class="more" aria-label="ID"><svg viewBox="0 0 24 24"><path d="M2 2h20v20H2z"/><ellipse cx="12" cy="12" rx="4" ry="6" fill="none" stroke="#333" stroke-width="3"/></svg></button>
            <i class="sep"></i>
            <button class="more" aria-label="垂直布局"><svg viewBox="0 0 24 24"><path d="M7 1h7v6H7zM7 9h7v6H7zM7 17h7v6H7zM3 4h2v2H3z"/></svg></button>
            <button aria-label="布局子对象"><svg viewBox="0 0 24 24"><path d="M2 10h5v5H2zM16 2h3v4h-3zM16 18h3v4h-3z"/><path class="line" d="M16 4h-4v16h4M8 12h4"/></svg></button>
            <i class="sep"></i>
            <button class="on" aria-label="浏览器"><svg viewBox="0 0 24 24"><use href="#checks" y="1" width="10" height="10"/><use href="#checks" y="13" width="10" height="10"/><path class="line" d="M11 6h11M11 18h11"/></svg></button>
            <button class="on" aria-label="参数编辑器"><svg viewBox="0 0 24 24"><path class="line" d="M2 2h20v20H2zM2 5h20"/><use href="#checks" x="6" y="8" width="12" height="12"/></svg></button>
            <i class="sep"></i>
            <button aria-label="按材质选择"><svg viewBox="0 0 24 24"><use href="#checks" width="15" height="15"/><path class="amber" d="M12 9l10 8h-4l2 5-2 1-2-5-4 3z"/></svg></button>
            <button aria-label="图层"><svg viewBox="0 0 24 24"><path class="line" d="M3 2h13v5H3zM3 9h13v5H3zM3 16h13v6H3z"/><path class="line line-teal" d="M16 3q6 9 0 17M16 8h5M16 16h5"/></svg></button>
            <button aria-label="m"><svg viewBox="0 0 24 24"><path class="line" d="M5 14V5M5 8q3-4 6 0v6M11 8q3-4 6 0v6"/><path class="line" stroke-dasharray="2 1" d="M2 19h20M2 22h20"/></svg></button>
            <span class="drop view-drop"><select aria-label="视图"><option>视图 1</option></select></span>
        </div>

        <div class="slate-body">
            <section class="browser">
                <h2 class="dock-title">材质/贴图浏览器<span>x</span></h2>
                <div class="search"><i></i><input type="text" aria-label="搜索" placeholder="按名称搜索..."></div>
                <div class="list-wrap">
                    <div class="list">
                        <h3>+ 扫描线</h3>
                        <h3>− V-Ray</h3>
                        <ul>
                            <li><i class="ball"></i>VRay_AL皮肤材质</li>
                            <li><i></i>VRay_GLSL材质</li>
                            <li><i></i>VRay_MDL_材质</li>
                            <li><i></i>VRay_OSL_材质</li>
                            <li><i></i>VRay_VRmat材质</li>
                            <li><i></i>VRay_亮片材质</li>
                            <li><i class="ball blue"></i>VRay_亮片材质2</li>
                            <li><i></i>VRay_凹凸材质</li>
                            <li><i></i>VRay_切换材质</li>
                            <li><i class="ball"></i>VRay_卡通材质</li>
                            <li><i></i>VRay_双面材质</li>
                            <li><i class="ball"></i>VRay_快速_SSS2</li>
                            <li><i></i>VRay_扫描材质</li>
                            <li><i></i>VRay_插件节点材质</li>
                            <li><i class="ball dark"></i>VRay_散布体积</li>
                            <li><i></i>VRay_材质包裹器</li>
                            <li><i class="ball brown"></i>VRay_毛发材质2</li>
                            <li><i></i>VRay_混合材质</li>
                            <li class="selected"><i class="ball lit"></i>VRay_灯光材质</li>
                            <li><i class="ball"></i>VRay_点粒子材质</li>
                            <li><i class="ball"></i>VRay_矢量置换烘培</li>
                            <li><i class="ball dark"></i>VRay_覆盖材质</li>
                        </ul>
                    </div>
                    <div class="scroll"><div class="thumb"></div></div>
                </div>
            </section>

            <section class="view">
                <div class="view-tabs"><button>视图 1</button></div>
                <div class="canvas">
                    <article class="node blue-node">
                        <div class="out"><i class="port"></i></div>
                        <div class="node-box">
                            <header><i class="preview"></i><div>JianE_Mtl...<br>VRay_灯...</div><b></b></header>
                            <p><i class="port"></i>灯光颜色</p><p><i class="port"></i>不透明度</p><p><i class="port"></i>置换</p>
                            <footer></footer>
                        </div>
                    </article>
                    <article class="node picked">
                        <svg class="marquee" viewBox="-10 -10 240 180"><path d="M-5 0q0-5 6-5h199q8 0 8 8v31h5q7 1 7 8v66l-8 8h-4v34l-10 10H2q-7 0-7-7z"/></svg>
                        <div class="out"><i class="port"></i></div>
                        <div class="node-box">
                            <header><i class="preview"></i><div>JianE_Mtl...<br>VRay_灯...</div><b></b></header>
                            <p><i class="port"></i>灯光颜色</p><p><i class="port"></i>不透明度</p><p><i class="port"></i>置换</p>
                            <footer></footer>
                        </div>
                    </article>
                    <svg class="pointer" viewBox="0 0 40 50"><circle cx="17" cy="17" r="17" fill="#b9c23a" opacity=".65"/><path d="M17 17v25l6-5 4 8 5-2-4-8 7-1z" fill="#fff" stroke="#222"/></svg>
                    <button class="finder" aria-label="查找"><svg viewBox="0 0 24 24"><path d="M5 2h5v4h4V2h5l3 12v8h-8v-9h-4v9H2v-8z"/></svg></button>
                </div>
            </section>

            <section class="params">
                <h2 class="dock-title sans">JianE_Mtl_20224279421245119（VRay_灯光材质）<span>x</span></h2>
                <input class="mtl-name" type="text" aria-label="材质名称" value="JianE_Mtl_20224279421245119">
                <div class="rollup">
                    <h3>灯光材质参数</h3>
                    <div class="row">
                        <label class="color-label" for="mult">颜色</label><button class="swatch skin" aria-label="颜色"></button>
                        <span class="spin wide"><input id="mult" type="text" value="1.0"><svg><use href="#spinarrows"/></svg></span>
                        <button class="map">无贴图</button><input type="checkbox" aria-label="启用颜色贴图" checked>
                    </div>
                    <div class="row">
                        <span>不透明度:</span><button class="map">无贴图</button><input type="checkbox" aria-label="启用不透明度贴图" checked>
                    </div>
                    <div class="ticks">
                        <label><input type="checkbox">背面发光</label>
                        <label><input type="checkbox">补偿摄影机曝光</label>
                        <label><input type="checkbox">倍增颜色的不透明度</label>
                    </div>
                    <div class="row">
                        <label class="disp-label" for="disp">置换:</label>
                        <span class="spin wide"><input id="disp" type="text" value="1.0"><svg><use href="#spinarrows"/></svg></span>
                        <button class="map">无贴图</button><input type="checkbox" aria-label="启用置换贴图" checked>
                    </div>
                    <fieldset>
                        <legend>直接照明</legend>
                        <label><input type="checkbox" checked>开</label>
                        <label class="cutoff" for="cut">中止</label>
                        <span class="spin wide"><input id="cut" type="text" value="0.001"><svg><use href="#spinarrows"/></svg></span>
                    </fieldset>
                </div>
                <div class="rollup missing">
                    <h3>缺少材质/贴图</h3>
                    <p>当前加载的任何 DLL 都没<br>有提供该类的实现。</p>
                </div>
            </section>
        </div>

        <div class="slate-status">
            <button class="on" aria-label="预览"><svg><use href="#teapot"/></svg></button>
            <span>已完成渲染</span>
            <span class="drop zoom-drop"><select aria-label="缩放比例"><option>144%</option></select></span>
            <button aria-label="平移"><svg><use href="#hand"/></svg></button>
            <button aria-label="缩放"><svg><use href="#mag"/></svg></button>
            <button aria-label="缩放区域"><svg viewBox="0 0 24 24"><path class="line" stroke-dasharray="2 3" d="M2 2h20v20H2z"/><circle class="line line-teal" cx="14" cy="11" r="4"/><path class="line line-teal" d="M11 14l-6 6"/></svg></button>
            <button aria-label="最大化显示"><svg viewBox="0 0 24 24"><path class="line" d="M2 7V2h5M17 2h5v5M22 17v5h-5M7 22H2v-5"/><use href="#cube" width="24" height="24"/></svg></button>
            <button aria-label="最大化选定"><svg viewBox="0 0 24 24"><path class="line" d="M2 7V2h5M17 2h5v5M22 17v5h-5M7 22H2v-5"/><use class="teal" href="#cube" width="24" height="24"/></svg></button>
            <button aria-label="平移到选定"><svg viewBox="0 0 24 24"><path class="line" d="M2 7V2h5M17 2h5v5M22 17v5h-5M7 22H2v-5"/><use class="teal" href="#hand" x="2" y="2" width="20" height="20"/></svg></button>
        </div>
    </div>

    <div class="watermark"><svg viewBox="0 0 46 30"><path d="M0 0h14v12H0zM18 0h4v30h-4zM26 0h18v4H26zM26 8h18v22H26zM0 16h14v14H0z"/></svg>tafe.cc</div>
</body>
</html>
```
FILE: styles.css
```css
* {
    box-sizing: border-box;
}
body {
    margin: 0;
    height: 100vh;
    display: flex;
    flex-direction: column;
    position: relative;
    overflow: hidden;
    background: #444;
    color: #e6e6e6;
    font-family: "Liberation Serif", "Noto Sans CJK SC", serif;
    font-size: 12px;
    line-height: 16px;
}
p, h2, h3, ul {
    margin: 0;
    padding: 0;
    font-size: 12px;
}
a {
    color: inherit;
    text-decoration: none;
}
button, input, select {
    font: inherit;
    color: inherit;
    border: none;
    padding: 0;
    margin: 0;
    background: none;
}
button {
    display: flex;
    align-items: center;
    justify-content: center;
    position: relative;
    flex: none;
    white-space: nowrap;
}
svg {
    display: block;
    flex: none;
    fill: #d6d6d6;
    color: #d6d6d6;
}
.sprite {
    position: absolute;
    width: 0;
    height: 0;
}
.teal { fill: #3fb5a5; color: #3fb5a5; }
.amber { fill: #f5a81c; color: #f5a81c; }
.line { fill: none; stroke: #d6d6d6; stroke-width: 2; }
.line-teal { stroke: #3fb5a5; }
.line-amber { stroke: #f0b030; }
.thick { stroke-width: 4; }
.hair { stroke-width: 1; }
.white svg, svg.white { fill: #fff; color: #fff; }
.white .line { stroke: #fff; }
.on { background: #5a81b9; }
.sep {
    width: 2px;
    height: 20px;
    margin: 0 2px;
    flex: none;
    border-left: 1px solid #222;
    border-right: 1px solid #505050;
}
/* corner mark on buttons with a flyout */
.more::after {
    content: "";
    position: absolute;
    right: 0;
    bottom: 0;
    border-left: 5px solid transparent;
    border-bottom: 5px solid #e6e6e6;
}

/* Drop-downs and spinners */
.drop {
    position: relative;
    display: block;
    flex: none;
}
.drop select {
    appearance: none;
    width: 100%;
    height: 18px;
    display: block;
    padding: 0 4px;
    background: #626262;
}
.drop::after {
    content: "";
    position: absolute;
    right: 6px;
    top: 7px;
    border: 3px solid transparent;
    border-bottom: none;
    border-top: 5px solid #d6d6d6;
}
.spin {
    display: flex;
    align-items: center;
    width: 68px;
    height: 17px;
    background: #5c5c5c;
}
.spin input {
    flex: 1;
    min-width: 0;
    padding-left: 2px;
}
.spin svg {
    width: 10px;
    height: 14px;
}
.spin.wide {
    width: 57px;
}

/* Title bar */
.titlebar {
    height: 23px;
    flex: none;
    display: flex;
    align-items: center;
    position: relative;
    background: #0078d7;
    color: #fff;
    font-family: "Open Sans", "Noto Sans CJK SC", sans-serif;
}
.app-icon {
    width: 16px;
    height: 16px;
    margin: 0 5px 0 2px;
}
.win-buttons {
    margin-left: auto;
    margin-right: 2px;
    display: flex;
}
.win-buttons button {
    width: 46px;
    height: 20px;
}
.win-buttons svg, .slate-buttons svg, .glyph {
    width: 12px;
    height: 12px;
    fill: none;
    stroke: #fff;
}
.recorder {
    position: absolute;
    left: 708px;
    top: 0;
    width: 502px;
    height: 23px;
    padding-left: 32px;
    display: flex;
    align-items: center;
    background: #20252f;
    clip-path: polygon(0 0, 100% 0, 96% 100%, 5% 100%);
}
.recorder svg {
    width: 16px;
    height: 16px;
    margin-right: 14px;
}
.recorder svg:nth-child(-n+2) {
    margin-right: 10px;
}
.rec-size {
    width: 116px;
}
.rec-state {
    width: 136px;
}

/* Main menu */
.menubar {
    height: 23px;
    flex: none;
    display: flex;
    align-items: center;
    gap: 27px;
    padding: 0 3px 1px 14px;
    background: linear-gradient(#454545, #555);
    border-bottom: 1px solid #1a1a1a;
    color: #fff;
    font-family: "Liberation Mono", "Noto Sans CJK SC", monospace;
    white-space: nowrap;
}
.workspace {
    margin-left: auto;
    margin-right: -24px;
    color: #ddd;
}
.workspace-drop {
    width: 123px;
}

/* Main toolbar */
.toolbar {
    height: 34px;
    flex: none;
    display: flex;
    align-items: center;
    padding-left: 3px;
    padding-bottom: 1px;
}
.grip {
    width: 2px;
    height: 28px;
    margin-right: 4px;
    border-left: 1px dotted #999;
}
.tool {
    width: 30px;
    height: 29px;
    margin: 0 1px;
}
.tool svg {
    width: 24px;
    height: 24px;
}
.toolbar .drop {
    margin: 0 2px 8px 1px;
}
.filter-drop {
    width: 67px;
}
.set-drop {
    width: 117px;
}

/* Left tool columns */
.workspace-area {
    flex: 1;
    min-height: 0;
    display: flex;
}
.side {
    width: 70px;
    flex: none;
    display: flex;
    border-right: 2px solid #383838;
}
.side-col {
    width: 34px;
    display: flex;
    flex-direction: column;
    align-items: center;
}
.dots {
    display: block;
    width: 28px;
    height: 8px;
    flex: none;
    background: radial-gradient(#999 0, #999 1px, transparent 1px) 0 2px / 3px 3px repeat-x;
}
.side-col .dots {
    height: 7px;
}
.side-col button {
    width: 30px;
    height: 31px;
    font-family: "Liberation Sans", "Noto Sans CJK SC", sans-serif;
    font-weight: bold;
    color: #fff;
}
.side-col svg {
    width: 23px;
    height: 23px;
}
.side-col button + .dots {
    height: 10px;
}
.rule {
    width: 28px;
    height: 8px;
    flex: none;
    border-top: 2px solid #1c1c1c;
}
.side-col .ring::before {
    content: "";
    position: absolute;
    width: 24px;
    height: 24px;
    border: 2px solid #fff;
    border-radius: 50%;
}
.side-col .ring {
    font-size: 14px;
}
.side-col .ring svg {
    width: 18px;
    height: 18px;
}
.side-col .rb {
    font-style: italic;
    font-size: 12px;
}
.side-col .dll {
    font-size: 9px;
    font-weight: normal;
}
.side-col .cad {
    font-size: 9px;
}
.cad span {
    position: absolute;
}

/* Viewports */
.viewports {
    flex: 1;
    display: grid;
    grid-template-columns: 1fr 1fr;
    gap: 4px;
    background: #3a3a3a;
}
.viewport {
    position: relative;
    display: flex;
    align-items: center;
    background: #080808;
}
.viewport.active {
    border: 2px solid #6d6730;
}
.vp-label {
    position: absolute;
    left: 4px;
    top: 7px;
    color: #ddd;
    font-family: "Noto Sans", "Noto Sans CJK SC", sans-serif;
    font-size: 11px;
}
.active .vp-label {
    top: 5px;
}
.frame {
    width: 100%;
    aspect-ratio: 816 / 353;
    border: 1px solid #a0a82e;
    background: #34342e;
}
.frame svg {
    width: 100%;
    height: 100%;
}
.viewcube {
    position: absolute;
    right: 10px;
    top: 27px;
    width: 90px;
    height: 64px;
}
.viewcube text {
    font-size: 9px;
    fill: #999;
}
.axis {
    position: absolute;
    right: -36px;
    bottom: 2px;
    width: 12px;
    height: 20px;
    fill: none;
    stroke: #1c8a1c;
    stroke-width: 2;
    z-index: 1;
}

/* Command panel */
.command {
    width: 214px;
    flex: none;
    padding: 0 3px 0 7px;
}
.command .dots {
    width: 100%;
}
.tabs {
    display: flex;
    height: 28px;
    margin-bottom: 4px;
    background: #3a3a3a;
}
.tabs button {
    width: 28px;
    margin-right: 4px;
}
.tabs svg {
    width: 18px;
    height: 18px;
    fill: #999;
}
.tabs .on {
    background: #484848;
}
.name-row {
    display: flex;
    gap: 5px;
    height: 21px;
}
.obj-name {
    flex: 1;
    min-width: 0;
    padding-left: 4px;
    background: #626262;
    color: #fff;
    font-weight: bold;
}
.swatch {
    width: 20px;
    height: 20px;
    border: 2px solid #151515;
}
.swatch.green {
    background: #59d699;
}
.swatch.skin {
    background: #d5c6bd;
    margin: 0 6px 0 5px;
    border-width: 1px;
}
.mod-drop {
    margin: 7px 0 13px;
}
.mods {
    display: grid;
    grid-template-columns: 1fr 1fr;
    gap: 5px 6px;
    padding: 0 3px;
}
.mods button {
    height: 18px;
    background: #626262;
    border-radius: 2px;
    box-shadow: 0 1px 1px #333;
}
.mods button:disabled {
    background: #515151;
    color: #858585;
}
.stack {
    height: 127px;
    margin-top: 8px;
    border: 1px solid #fff;
}
.stack-tools {
    display: flex;
    align-items: center;
    height: 32px;
    padding-top: 4px;
}
.stack-tools button {
    width: 24px;
    height: 22px;
}
.stack-tools .sep {
    margin: 0 5px 0 4px;
    height: 16px;
}
.stack-tools svg {
    width: 16px;
    height: 16px;
}
.stack-tools .on {
    background: #48618a;
}
button:disabled svg {
    opacity: 0.2;
}
.panel-grip {
    display: block;
    width: 14px;
    margin: 21px auto 0;
    border-top: 3px double #999;
}

/* Status bar */
.status {
    height: 57px;
    flex: none;
    display: flex;
    padding: 6px 10px 0 4px;
    background: #444;
    white-space: nowrap;
}
.listener {
    width: 98px;
    height: 46px;
    border: 2px solid #eee;
    background: #fff;
}
.pink {
    height: 21px;
    background: #e0c6ca;
    border-bottom: 1px solid #777;
}
.listener input {
    width: 100%;
    height: 20px;
    padding-left: 3px;
    color: #111;
}
.prompt {
    margin-left: 4px;
    padding: 5px 0 0 3px;
    border-left: 2px solid #222;
}
.prompt p {
    margin-bottom: 9px;
}
.coords {
    margin-left: auto;
    width: 443px;
}
.status-row {
    display: flex;
    align-items: center;
    gap: 3px;
    height: 25px;
}
.status-row.second {
    gap: 5px;
    padding-left: 206px;
}
.mini {
    width: 21px;
    height: 20px;
}
.mini svg {
    width: 16px;
    height: 16px;
}
.status-row .mini + .mini {
    margin-left: 3px;
}
.status-row .sep {
    margin: 0;
}
.flat {
    background: #5c5c5c;
    border-radius: 2px;
}
.led {
    width: 10px;
    height: 10px;
    border-radius: 50%;
    background: #4fd442;
}
.playback {
    width: 120px;
    margin-left: 5px;
}
.play-row {
    display: flex;
    align-items: center;
    justify-content: space-between;
    height: 25px;
}
.play-row button {
    width: 20px;
    height: 20px;
}
.play-row svg {
    width: 16px;
    height: 16px;
}
.play-row .spin {
    width: 70px;
}
.play-row .spin svg {
    height: 14px;
}
.setkey {
    width: 40px;
    height: 44px;
    margin: 2px 5px 0 11px;
    background: #585858;
}
.setkey svg {
    width: 30px;
    height: 34px;
}
.keys {
    display: grid;
    grid-template-columns: 65px 112px;
    grid-auto-rows: 20px;
    gap: 4px 6px;
    padding-top: 2px;
}
.key-filter {
    display: flex;
    gap: 4px;
}
.key-filter .flat {
    flex: 1;
}
.nav {
    display: grid;
    grid-template-columns: repeat(4, 23px);
    grid-auto-rows: 25px;
    margin-left: 13px;
}
.nav svg {
    width: 17px;
    height: 17px;
}

/* Windows taskbar */
.taskbar {
    height: 30px;
    flex: none;
    display: flex;
    align-items: center;
    padding-right: 11px;
    background: #0c2135;
    font-family: "Open Sans", "Noto Sans CJK SC", sans-serif;
    color: #fff;
}
.taskbar button {
    width: 36px;
    height: 30px;
    margin-right: 1px;
}
.taskbar svg {
    width: 17px;
    height: 17px;
}
.taskbar .open::after {
    content: "";
    position: absolute;
    left: 4px;
    right: 4px;
    bottom: 0;
    height: 2px;
    background: #8fb8dd;
}
.taskbar .current {
    background: #1465a8;
}
.taskbar .current::after {
    left: 0;
    right: 0;
}
.taskbar time {
    margin-left: auto;
}

/* Floating windows over the viewports */
.floater {
    position: absolute;
    width: 144px;
    height: 27px;
    display: flex;
    align-items: center;
    padding: 0 17px 0 8px;
    background: #fff;
}
.floater svg:first-child {
    width: 16px;
    height: 16px;
}
.floater .glyph {
    width: 11px;
    height: 11px;
    margin-left: auto;
    stroke: #777;
}
.floater .glyph:nth-child(2) {
    margin-left: 1px;
}
.floater .faint {
    opacity: 0.2;
}
.floater.first {
    left: 1072px;
    top: 85px;
}
.floater.second-win {
    left: 1217px;
    top: 86px;
}

/* Slate material editor */
.slate {
    position: absolute;
    left: 83px;
    top: 341px;
    width: 1117px;
    height: 628px;
    display: flex;
    flex-direction: column;
    background: #444;
    z-index: 2;
}
.slate-title {
    height: 29px;
    display: flex;
    align-items: center;
    padding-left: 8px;
    background: #fff;
    color: #777;
    font-family: "Open Sans", "Noto Sans CJK SC", sans-serif;
}
.slate-icon {
    width: 14px;
    height: 14px;
    margin-right: 7px;
}
.slate-buttons {
    display: flex;
    margin-left: auto;
}
.slate-buttons button {
    width: 46px;
    height: 28px;
}
.slate-buttons svg {
    stroke: #666;
}
.slate-menu {
    display: flex;
    gap: 14px;
    height: 21px;
    padding: 3px 7px 0;
    background: #fff;
    color: #555;
}
.slate-tools {
    display: flex;
    align-items: center;
    height: 23px;
    padding-right: 4px;
}
.slate-tools button {
    width: 22px;
    height: 21px;
    margin-right: 1px;
}
.slate-tools svg {
    width: 16px;
    height: 16px;
}
.slate-tools .sep {
    margin: 0 2px 0 3px;
}
.view-drop {
    width: 198px;
    margin-left: auto;
}
.slate-body {
    flex: 1;
    min-height: 0;
    display: grid;
    grid-template-columns: 181px 1fr 362px;
    column-gap: 3px;
    background: #3a3a3a;
    border-top: 1px solid #161616;
    border-bottom: 1px solid #161616;
}
.dock-title {
    display: flex;
    height: 18px;
    padding: 0 5px 0 9px;
    border: 1px solid #777;
    border-bottom-color: #111;
    background: linear-gradient(#555, #222);
    line-height: 15px;
    white-space: nowrap;
    color: #eee;
}
.dock-title span {
    margin-left: auto;
    color: #111;
}
.dock-title.sans {
    font-family: "Liberation Sans", "Noto Sans CJK SC", sans-serif;
    padding-left: 6px;
}

/* Browser */
.browser {
    display: flex;
    flex-direction: column;
    min-height: 0;
    border-right: 2px solid #111;
    background: #444;
}
.search {
    display: flex;
    align-items: center;
    height: 26px;
    padding: 0 2px 4px 8px;
    gap: 7px;
}
.search i {
    border: 6px solid transparent;
    border-top: 8px solid #bbb;
    border-bottom: none;
}
.search input {
    flex: 1;
    min-width: 0;
    height: 16px;
    padding-left: 3px;
    background: #5f5f5f;
}
.search input::placeholder {
    color: #bbb;
}
.list-wrap {
    flex: 1;
    min-height: 0;
    display: flex;
    margin-left: 3px;
    border: 1px solid #161616;
    border-width: 1px 0 0 1px;
}
.list {
    flex: 1;
    min-width: 0;
    overflow: hidden;
    padding: 2px 1px 0 16px;
    color: #fff;
    white-space: nowrap;
}
.list h3 {
    height: 20px;
    margin: 7px 0 6px;
    padding-left: 4px;
    background: linear-gradient(#4c4c4c, #565656);
    box-shadow: 0 -1px #666, 0 4px #2a2a2a;
    font-weight: normal;
    line-height: 20px;
}
.list h3 + h3 {
    margin-bottom: 1px;
    box-shadow: none;
}
.list ul {
    margin-left: 12px;
    list-style: none;
}
.list li {
    display: flex;
    align-items: center;
    height: 20px;
    border-bottom: 1px solid #1d1d1d;
}
.list li i {
    width: 16px;
    height: 16px;
    margin: 0 4px 0 2px;
    background: linear-gradient(160deg, #eee, #b5b5b5);
}
.list li .ball { background: radial-gradient(circle, #999 0, #bbb 5px, #ddd 7px); }
.list li .blue { background: radial-gradient(circle, #d5d5ff 0, #8585b5 5px, #ccc 7px); }
.list li .dark { background: radial-gradient(circle, #777 0, #666 5px, #bbb 7px); }
.list li .brown { background: radial-gradient(circle, #a07c3c 0, #6b5226 5px, #bbb 7px); }
.list li .lit { background: radial-gradient(circle, #fff 6px, #ddd 8px); }
.list .selected {
    background: linear-gradient(90deg, #444, #29508c);
}
.scroll {
    width: 11px;
    padding: 66px 1px 0;
    border-left: 2px solid #1a1a1a;
    background: #2c2c2c;
}
.thumb {
    height: 224px;
    border: 1px solid #222;
    background: linear-gradient(#777, #444);
}

/* Node view */
.view {
    display: flex;
    flex-direction: column;
    min-width: 0;
    border: 1px solid #161616;
    border-width: 0 1px 0 1px;
}
.view-tabs {
    height: 23px;
    padding-left: 1px;
    border-bottom: 1px solid #1d1d1d;
    background: #3c3c3c;
}
.view-tabs button {
    width: 70px;
    height: 18px;
    border: 1px solid #999;
    border-width: 1px 0 0 1px;
    padding-right: 16px;
    background: #383838;
    font-weight: bold;
    font-style: italic;
}
.canvas {
    flex: 1;
    position: relative;
    overflow: hidden;
    background: repeating-linear-gradient(90deg, #484848 0 1px, transparent 1px 17px), repeating-linear-gradient(#484848 0 1px, transparent 1px 17px), #454545;
}
.node {
    position: absolute;
    left: 169px;
    top: 174px;
    width: 203px;
}
.node.blue-node {
    left: 341px;
    top: 286px;
}
.node-box {
    position: relative;
    height: 155px;
    border: 2px solid #f5f5f5;
    border-radius: 7px 7px 10px 7px;
    background: #afb9c3;
    color: #111;
}
.blue-node .node-box {
    border-color: #26435c;
    box-shadow: 1px 2px 3px #222;
}
.node header {
    display: flex;
    height: 56px;
    padding: 4px 0 0 4px;
    border-radius: 5px 5px 0 0;
    background: linear-gradient(#2e5670, #33617f);
    color: #fff;
    font-family: "Liberation Sans", "Noto Sans CJK SC", sans-serif;
    font-size: 18px;
    font-weight: bold;
    line-height: 24px;
}
.blue-node header {
    background: linear-gradient(#4a7ea6, #78a3c4);
    color: #101820;
}
.node header div {
    margin: -1px 0 0 5px;
    width: 118px;
}
.preview {
    width: 46px;
    height: 46px;
    border: 1px solid #fff;
    background: radial-gradient(circle at 50% 45%, #d5c6bd 18px, #b8a9a2 23px, #f2f2f2 26px);
}
.node header b {
    width: 13px;
    height: 4px;
    margin-top: 9px;
    background: #1f4058;
    border-bottom: 1px solid #8fb0c8;
}
.node p {
    position: relative;
    height: 26px;
    margin: 0 6px 0 4px;
    padding-left: 10px;
    border-bottom: 1px solid #6c7f92;
    font-size: 16px;
    line-height: 22px;
}
.node header + p {
    margin-top: 3px;
}
.port {
    position: absolute;
    left: -15px;
    top: 4px;
    width: 18px;
    height: 18px;
    border: 1px solid #66788d;
    border-radius: 50%;
    background: #a5b5c9;
}
.node p:nth-of-type(3) {
    border-bottom: none;
}
.node footer {
    height: 13px;
    margin: 1px 0 0;
    border-top: 1px solid #7a8896;
    border-radius: 0 0 8px 5px;
    background: repeating-linear-gradient(120deg, #55626e 0 1px, transparent 1px 4px) 184px 1px / 13px 8px no-repeat, linear-gradient(#b5bec6, #8f9aa5);
}
.out {
    position: absolute;
    left: 197px;
    top: 39px;
    width: 19px;
    height: 79px;
    border: 2px solid #eee;
    border-radius: 0 9px 9px 0;
    background: #38657f;
}
.blue-node .out {
    border-color: #26435c;
    background: #4a87b8;
}
.out .port {
    left: 8px;
    top: 28px;
    z-index: 1;
}
.marquee {
    position: absolute;
    left: -10px;
    top: -10px;
    width: 240px;
    height: 180px;
    fill: none;
    stroke: #c4c4c4;
    stroke-width: 3;
    stroke-dasharray: 11 4;
}
.pointer {
    position: absolute;
    left: 335px;
    top: 216px;
    width: 40px;
    height: 50px;
}
.finder {
    position: absolute;
    left: 4px;
    bottom: 3px;
    width: 26px;
    height: 26px;
    background: #505050;
}
.finder svg {
    width: 16px;
    height: 16px;
}

/* Parameter editor */
.params {
    padding: 0 1px;
    border-left: 1px solid #161616;
    background: #444;
}
.mtl-name {
    display: block;
    width: 346px;
    height: 18px;
    margin: 3px 0 8px 6px;
    padding-left: 2px;
    background: #5f5f5f;
}
.rollup {
    width: 345px;
    height: 202px;
    margin: 0 0 7px 3px;
    padding: 0 7px 0 3px;
    background: #515151;
    box-shadow: 0 0 1px #333;
    white-space: nowrap;
}
.rollup h3 {
    position: relative;
    height: 18px;
    padding-left: 14px;
    line-height: 18px;
    color: #fff;
}
.rollup h3::before {
    content: "";
    position: absolute;
    left: 2px;
    top: 7px;
    border: 3px solid transparent;
    border-top: 4px solid #ccc;
}
.rollup h3::after {
    content: "⋮⋮";
    position: absolute;
    right: 0;
    font-size: 8px;
    font-weight: normal;
    color: #999;
}
.row {
    display: flex;
    align-items: center;
    height: 28px;
}
.color-label {
    margin-left: 18px;
}
.disp-label {
    margin: 0 8px 0 6px;
}
.map {
    flex: 1;
    height: 19px;
    margin-left: 7px;
    background: #646464;
    border-radius: 2px;
    box-shadow: 0 1px 1px #3a3a3a;
}
input[type="checkbox"] {
    appearance: none;
    position: relative;
    width: 12px;
    height: 12px;
    margin: 0 0 0 7px;
    flex: none;
    background: #606060;
}
input[type="checkbox"]:checked::after {
    content: "";
    position: absolute;
    left: 4px;
    top: 0;
    width: 4px;
    height: 8px;
    border: solid #eee;
    border-width: 0 2px 2px 0;
    transform: rotate(42deg);
}
.ticks {
    padding: 1px 0 0 45px;
}
.ticks label, fieldset label {
    display: flex;
    align-items: center;
    gap: 5px;
    height: 20px;
}
.ticks + .row {
    height: 26px;
}
fieldset {
    display: flex;
    align-items: center;
    height: 38px;
    margin: -1px 0 0 2px;
    padding: 0 0 7px 42px;
    border: 1px solid #3a3a3a;
}
legend {
    margin-left: -42px;
    padding: 0 4px;
}
.cutoff {
    margin: 0 5px 0 62px;
}
.missing {
    height: 107px;
}
.missing p {
    padding: 10px 0 0 94px;
    line-height: 15px;
}

/* Slate status line */
.slate-status {
    display: flex;
    align-items: center;
    height: 25px;
    padding: 0 0 0 1px;
}
.slate-status button {
    width: 21px;
    height: 20px;
    margin-right: 2px;
}
.slate-status button:last-child {
    margin-right: 0;
}
.slate-status button.on {
    margin-right: 5px;
}
.slate-status svg {
    width: 16px;
    height: 16px;
}
.zoom-drop {
    width: 52px;
    margin: 0 4px 0 auto;
}

.watermark {
    position: absolute;
    left: 12px;
    top: 1038px;
    display: flex;
    gap: 4px;
    color: rgba(255, 255, 255, 0.22);
    font-family: "Liberation Sans", sans-serif;
    font-size: 34px;
    font-weight: bold;
    line-height: 30px;
    pointer-events: none;
}
.watermark svg {
    width: 46px;
    height: 30px;
    fill: rgba(255, 255, 255, 0.22);
}
```
